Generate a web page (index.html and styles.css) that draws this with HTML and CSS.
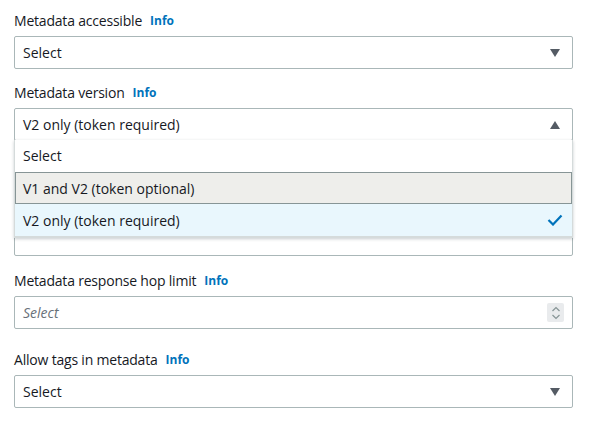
FILE: index.html
```html
<!DOCTYPE html>
<html>
<head>
<meta charset="utf-8">
<link rel="stylesheet" href="styles.css">
</head>
<body>
<div class="form">
  <div class="field">
    <div class="label">Metadata accessible <a class="info">Info</a></div>
    <div class="select"><span class="value">Select</span><svg class="caret" width="10" height="8" viewBox="0 0 10 8"><path d="M0 0H10L5 8Z" fill="#545b64"/></svg></div>
  </div>
  <div class="field open">
    <div class="label">Metadata version <a class="info">Info</a></div>
    <div class="select active"><span class="value">V2 only (token required)</span><svg class="caret" width="10" height="8" viewBox="0 0 10 8"><path d="M0 8H10L5 0Z" fill="#545b64"/></svg></div>
    <ul class="menu">
      <li class="option">Select</li>
      <li class="option hover">V1 and V2 (token optional)</li>
      <li class="option selected">V2 only (token required)<svg class="check" width="16" height="12" viewBox="0 0 16 12"><path d="M1.5 6L6 10.5L14.5 1.5" fill="none" stroke="#0073bb" stroke-width="2.2"/></svg></li>
    </ul>
  </div>
  <div class="field covered">
    <div class="select"></div>
  </div>
  <div class="field">
    <div class="label">Metadata response hop limit <a class="info">Info</a></div>
    <div class="select input"><span class="value placeholder">Select</span><span class="spinner"><svg width="16" height="18" viewBox="0 0 16 18"><path d="M4.5 7L8 3.5L11.5 7M4.5 11L8 14.5L11.5 11" fill="none" stroke="#879596" stroke-width="1.2"/></svg></span></div>
  </div>
  <div class="field last">
    <div class="label">Allow tags in metadata <a class="info">Info</a></div>
    <div class="select"><span class="value">Select</span><svg class="caret" width="10" height="8" viewBox="0 0 10 8"><path d="M0 0H10L5 8Z" fill="#545b64"/></svg></div>
  </div>
</div>
</body>
</html>
```

FILE: styles.css
```css
* { box-sizing: border-box; }
html, body { margin: 0; padding: 0; background: #ffffff; }
body {
  font-family: "Open Sans", "Noto Sans", Arial, sans-serif;
  font-size: 14px;
  color: #16191f;
}
.form {
  width: 573px;
  padding: 11px 0 0 14px;
  display: flex;
  flex-direction: column;
}
.field {
  position: relative;
  display: flex;
  flex-direction: column;
  gap: 5px;
  margin-bottom: 14px;
}
.label {
  height: 20px;
  line-height: 20px;
  display: flex;
  align-items: center;
  gap: 8px;
  letter-spacing: -0.2px;
}
.info {
  color: #0073bb;
  font-weight: 700;
  font-size: 12px;
  letter-spacing: 0;
}
.select {
  height: 33px;
  border: 1px solid #aab7b8;
  border-radius: 2px;
  display: flex;
  align-items: center;
  justify-content: space-between;
  padding: 0 12px 0 8px;
  background: #fff;
}
.placeholder { font-style: italic; color: #687078; }
.caret { display: block; }
.menu {
  position: absolute;
  left: 0;
  top: calc(100% - 1px);
  width: 559px;
  margin: 0;
  padding: 0;
  list-style: none;
  background: #fff;
  border: 1px solid #d5dbdb;
  border-top: none;
  box-shadow: 0 1px 3px rgba(0,28,36,0.22);
  z-index: 2;
}
.option {
  height: 32px;
  display: flex;
  align-items: center;
  justify-content: space-between;
  padding: 0 9px 0 8px;
  border-bottom: 1px solid transparent;
}
.option.hover {
  background: #eeeeeb;
  border: 1px solid #879596;
  padding-left: 7px;
  height: 32px;
}
.option.selected {
  background: #e9f7fd;
  height: 33px;
  border-bottom: 1px solid #d5dbdb;
}
.check { display: block; }
.covered { margin-bottom: 15px; }
.covered .select { height: 101px; }
.input { padding-right: 8px; }
.spinner {
  width: 17px;
  height: 19px;
  background: #e9ebed;
  border-radius: 2px;
  display: flex;
  align-items: center;
  justify-content: center;
}
.last { margin-top: 7px; }
```
